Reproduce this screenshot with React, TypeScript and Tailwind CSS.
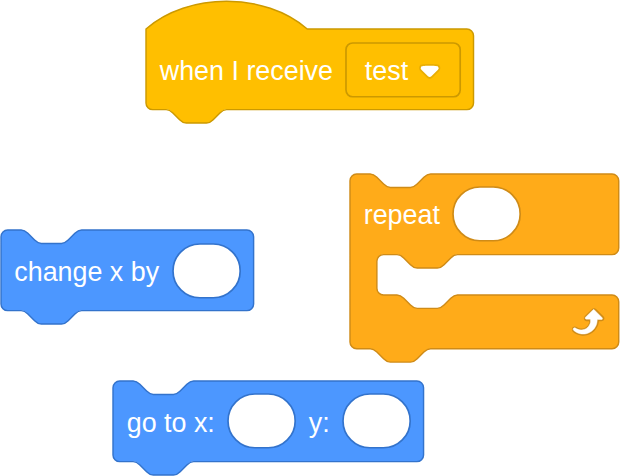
import type { ReactNode } from 'react';

// Workspace zoom: one block unit in CSS pixels.
const SCALE = 1.6796;

const NOTCH = 'c 2,0 3,1 4,2 l 4,4 c 1,1 2,2 4,2 h 12 c 2,0 3,-1 4,-2 l 4,-4 c 1,-1 2,-2 4,-2';
const NOTCH_BACK = 'c -2,0 -3,1 -4,2 l -4,4 c -1,1 -2,2 -4,2 h -12 c -2,0 -3,-1 -4,-2 l -4,-4 c -1,-1 -2,-2 -4,-2';
const FOOT = `H 48 ${NOTCH_BACK} H 4 a 4,4 0 0,1 -4,-4 z`;

const stackPath = (w: number) =>
  `M 0,4 A 4,4 0 0,1 4,0 H 12 ${NOTCH} H ${w - 4} a 4,4 0 0,1 4,4 v 40 a 4,4 0 0,1 -4,4 ${FOOT}`;

const hatPath = (w: number) =>
  `M 0,0 c 25,-22 71,-22 96,0 H ${w - 4} a 4,4 0 0,1 4,4 v 40 a 4,4 0 0,1 -4,4 ${FOOT}`;

const loopPath = (w: number) =>
  `M 0,4 A 4,4 0 0,1 4,0 H 12 ${NOTCH} H ${w - 4} a 4,4 0 0,1 4,4 v 40 a 4,4 0 0,1 -4,4 ` +
  `H 64 ${NOTCH_BACK} h -8 a 4,4 0 0,0 -4,4 v 16 a 4,4 0 0,0 4,4 h 8 ${NOTCH} ` +
  `H ${w - 4} a 4,4 0 0,1 4,4 v 24 a 4,4 0 0,1 -4,4 ${FOOT}`;

type BlockProps = {
  className: string;
  shapeClass: string;
  path: string;
  children: ReactNode;
};

function Block({ className, shapeClass, path, children }: BlockProps) {
  return (
    <div className={`absolute ${className}`}>
      <svg className={`absolute left-0 top-0 overflow-visible ${shapeClass}`} width="1" height="1">
        <path d={path} transform={`scale(${SCALE})`} strokeWidth="0.85" />
      </svg>
      {children}
    </div>
  );
}

function Row({ children }: { children: ReactNode }) {
  return <div className="relative flex h-[80.6px] items-center gap-[13.4px] pl-[13.4px]">{children}</div>;
}

function Label({ children }: { children: ReactNode }) {
  return <span className="whitespace-nowrap pt-[2.8px] leading-8">{children}</span>;
}

function Slot({ className }: { className: string }) {
  return (
    <svg className={`shrink-0 overflow-visible ${className}`} width="67.2" height="53.75" viewBox="0 0 40 32">
      <rect width="40" height="32" rx="16" fill="#fff" strokeWidth="1" />
    </svg>
  );
}

function Dropdown({ value }: { value: string }) {
  return (
    <div className="relative flex h-[53.75px] w-[114.2px] items-center">
      <svg className="absolute inset-0 overflow-visible" width="114.2" height="53.75">
        <rect width="114.2" height="53.75" rx="6.72" fill="none" stroke="#CC9900" strokeWidth="1.68" />
      </svg>
      <span className="pl-[18.5px] pt-[2.8px] leading-8">{value}</span>
      <svg className="absolute left-[72.9px] top-[21px]" width="21.35" height="14.76" viewBox="0 0 12.71 8.79">
        <path
          fill="#231f20"
          opacity="0.1"
          d="M12.71,2.44A2.41,2.41,0,0,1,12,4.16L8.08,8.08a2.45,2.45,0,0,1-3.45,0L.72,4.16A2.42,2.42,0,0,1,0,2.44,2.48,2.48,0,0,1,.71.71C1,.47,1.43,0,6.36,0S11.75.46,12,.71A2.44,2.44,0,0,1,12.71,2.44Z"
        />
        <path
          fill="#fff"
          d="M6.36,7.79a1.43,1.43,0,0,1-1-.42L1.42,3.45a1.44,1.44,0,0,1,0-2c.56-.56,9.31-.56,9.87,0a1.44,1.44,0,0,1,0,2L7.37,7.37A1.43,1.43,0,0,1,6.36,7.79Z"
        />
      </svg>
    </div>
  );
}

function LoopArrow() {
  return (
    <svg className="absolute left-[214.6px] top-[127.8px]" width="40.3" height="40.3" viewBox="0 0 24 24">
      <path
        fill="#CF8B17"
        d="M23.3,11c-0.3,0.6-0.9,1-1.5,1h-1.6c-0.1,1.3-0.5,2.5-1.1,3.6c-0.9,1.7-2.3,3.2-4.1,4.1c-1.7,0.9-3.6,1.2-5.5,0.9c-1.8-0.3-3.5-1.1-4.9-2.3c-0.7-0.7-0.7-1.9,0-2.6c0.6-0.6,1.6-0.7,2.3-0.2H7c0.9,0.6,1.9,0.9,2.9,0.9s1.9-0.3,2.7-0.9c1.1-0.8,1.8-2.1,1.8-3.5h-1.5c-0.9,0-1.7-0.7-1.7-1.7c0-0.4,0.2-0.9,0.5-1.2l4.4-4.4c0.7-0.6,1.7-0.6,2.4,0L23,9.2C23.5,9.7,23.6,10.4,23.3,11z"
      />
      <path
        fill="#fff"
        stroke="#fff"
        strokeWidth="0.25"
        d="M21.8,11h-2.6c0,1.5-0.3,2.9-1,4.2c-0.8,1.6-2.1,2.8-3.7,3.6c-1.5,0.8-3.3,1.1-4.9,0.8c-1.6-0.2-3.2-1-4.4-2.1c-0.4-0.3-0.5-0.9-0.2-1.2c0.3-0.4,0.9-0.5,1.2-0.2l0,0c1,0.7,2.2,1.1,3.4,1.1s2.3-0.3,3.3-1c0.9-0.6,1.6-1.5,2-2.6c0.3-0.9,0.4-1.8,0.2-2.8h-2.4c-0.4,0-0.7-0.3-0.7-0.7c0-0.2,0.1-0.3,0.2-0.4l4.4-4.4c0.3-0.3,0.7-0.3,0.9,0L22,9.8c0.3,0.3,0.4,0.6,0.3,0.9S22,11,21.8,11z"
      />
    </svg>
  );
}

const MOTION = 'fill-[#4C97FF] stroke-[#3373CC]';
const CONTROL = 'fill-[#FFAB19] stroke-[#CF8B17]';
const EVENT = 'fill-[#FFBF00] stroke-[#CC9900]';

export default function App() {
  return (
    <main className="relative h-[476px] w-[620px] overflow-hidden bg-white font-['Liberation_Sans',Arial,sans-serif] text-[26.87px] text-white">
      <Block className="left-[146.4px] top-[29.4px] w-[327.3px]" shapeClass={EVENT} path={hatPath(195)}>
        <Row>
          <Label>when I receive</Label>
          <Dropdown value="test" />
        </Row>
      </Block>

      <Block className="left-[350.3px] top-[173.6px] w-[268.6px]" shapeClass={CONTROL} path={loopPath(160)}>
        <Row>
          <Label>repeat</Label>
          <Slot className="stroke-[#CF8B17]" />
        </Row>
        <LoopArrow />
      </Block>

      <Block className="left-[0.9px] top-[230.4px] w-[252.6px]" shapeClass={MOTION} path={stackPath(150.4)}>
        <Row>
          <Label>change x by</Label>
          <Slot className="stroke-[#3373CC]" />
        </Row>
      </Block>

      <Block className="left-[113.3px] top-[381px] w-[310.6px]" shapeClass={MOTION} path={stackPath(184.9)}>
        <Row>
          <Label>go to x:</Label>
          <Slot className="stroke-[#3373CC]" />
          <Label>y:</Label>
          <Slot className="stroke-[#3373CC]" />
        </Row>
      </Block>
    </main>
  );
}
